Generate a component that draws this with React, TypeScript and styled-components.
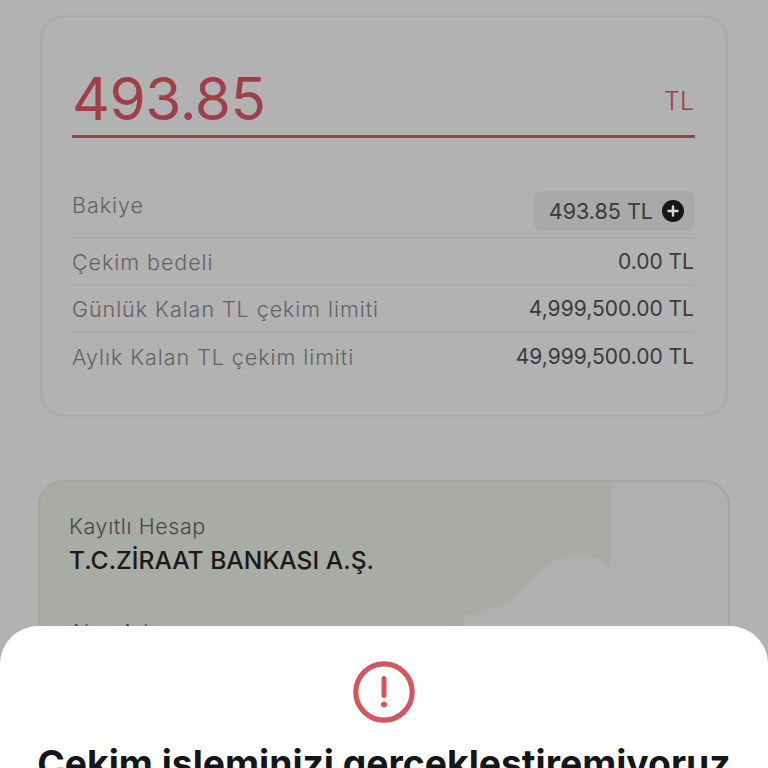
import React from "react";
import styled, { createGlobalStyle } from "styled-components";

const Global = createGlobalStyle`
  html, body { margin: 0; padding: 0; background: #b2b2b2; }
  * { box-sizing: border-box; }
`;

const Page = styled.div`
  position: relative;
  width: 768px;
  height: 768px;
  overflow: hidden;
  background: #b2b2b2;
  font-family: Inter, "Liberation Sans", sans-serif;
  padding: 15px 38px 0;
  display: flex;
  flex-direction: column;
  gap: 63px;
`;

const LimitCard = styled.section`
  margin: 0 2px;
  height: 402px;
  border: 3px solid #acacaa;
  border-radius: 24px;
  padding: 46px 30px 0 29px;
  flex: none;
`;

const AmountRow = styled.div`
  display: flex;
  justify-content: space-between;
  align-items: flex-end;
  height: 74px;
  border-bottom: 3px solid #9f3f47;
  color: #9f3f47;
  padding-bottom: 4px;
`;

const Amount = styled.span`
  font-size: 58.5px;
  line-height: 64px;
  letter-spacing: -0.4px;
  font-weight: 400;
`;

const Currency = styled.span`
  font-size: 25px;
  line-height: 26px;
  font-weight: 300;
  margin-right: 1px;
  margin-bottom: 17px;
`;

const Rows = styled.div`
  margin-top: 53px;
`;

const Row = styled.div<{ $first?: boolean; $last?: boolean }>`
  display: flex;
  justify-content: space-between;
  align-items: ${(p) => (p.$first ? "flex-start" : "center")};
  height: ${(p) => (p.$first ? "48px" : "47px")};
  border-bottom: ${(p) => (p.$last ? "none" : "2px solid #acacac")};
`;

const Label = styled.span<{ $first?: boolean }>`
  color: #626262;
  font-size: 21.5px;
  line-height: 26px;
  font-weight: 300;
  letter-spacing: 0.95px;
  margin-top: ${(p) => (p.$first ? "1px" : "0")};
`;

const Value = styled.span`
  color: #3a3a3a;
  font-size: 21px;
  line-height: 26px;
  font-weight: 400;
  margin-right: 1px;
  padding-top: 1px;
`;

const BalanceChip = styled.div`
  display: flex;
  align-items: center;
  gap: 8px;
  height: 40px;
  padding: 0 11px 0 15px;
  background: #a9a9a9;
  border-radius: 8px;
`;

const ChipValue = styled(Value)`
  font-size: 21.5px;
  padding-top: 0;
`;

const PlusBadge = styled.svg`
  width: 22px;
  height: 22px;
  display: block;
`;

const AccountCard = styled.section`
  position: relative;
  flex: none;
  height: 340px;
  background: #a9aba5;
  border: 2px solid #a4a69f;
  border-radius: 26px;
  overflow: hidden;
  padding: 31px 29px;
`;

const CardArt = styled.svg`
  position: absolute;
  right: 0;
  top: 0;
  width: 280px;
  height: 160px;
`;

const AccountLabel = styled.div`
  position: relative;
  color: #464644;
  font-size: 21.5px;
  line-height: 26px;
  font-weight: 300;
  letter-spacing: 0.6px;
`;

const BankName = styled.div`
  position: relative;
  margin-top: 6px;
  color: #1a1a1a;
  font-size: 24.6px;
  line-height: 30px;
  font-weight: 500;
`;

const HolderLabel = styled(AccountLabel)`
  margin-top: 44px;
`;

const Sheet = styled.div`
  position: absolute;
  left: 0;
  right: 0;
  top: 626px;
  height: 142px;
  background: #fff;
  border-radius: 38px 38px 0 0;
  overflow: hidden;
  display: flex;
  flex-direction: column;
  align-items: center;
  padding-top: 35px;
`;

const AlertIcon = styled.svg`
  width: 64px;
  height: 64px;
  display: block;
  flex: none;
`;

const SheetTitle = styled.h2`
  margin: 17px 0 0;
  color: #15161a;
  font-size: 37.3px;
  line-height: 44px;
  font-weight: 700;
  white-space: nowrap;
`;

const rows = [
  ["Çekim bedeli", "0.00 TL"],
  ["Günlük Kalan TL çekim limiti", "4,999,500.00 TL"],
  ["Aylık Kalan TL çekim limiti", "49,999,500.00 TL"],
];

export default function App() {
  return (
    <Page>
      <Global />
      <LimitCard>
        <AmountRow>
          <Amount>493.85</Amount>
          <Currency>TL</Currency>
        </AmountRow>
        <Rows>
          <Row $first>
            <Label $first>Bakiye</Label>
            <BalanceChip>
              <ChipValue>493.85 TL</ChipValue>
              <PlusBadge viewBox="0 0 22 22">
                <circle cx="11" cy="11" r="11" fill="#161616" />
                <path d="M11 6.5v9M6.5 11h9" stroke="#d8d8d8" strokeWidth="2.4" strokeLinecap="round" />
              </PlusBadge>
            </BalanceChip>
          </Row>
          {rows.map(([label, value], i) => (
            <Row key={label} $last={i === rows.length - 1}>
              <Label>{label}</Label>
              <Value>{value}</Value>
            </Row>
          ))}
        </Rows>
      </LimitCard>
      <AccountCard>
        <CardArt viewBox="0 0 280 160">
          <path d="M163 0H280V160H10L17 135C40 125 60 125 72 110C90 90 105 73 132 73C146 73 156 80 163 88C163 60 163 30 163 0Z" fill="#afafaf" />
        </CardArt>
        <AccountLabel>Kayıtlı Hesap</AccountLabel>
        <BankName>T.C.ZİRAAT BANKASI A.Ş.</BankName>
        <HolderLabel>Alıcı Adı</HolderLabel>
      </AccountCard>
      <Sheet>
        <AlertIcon viewBox="0 0 64 64">
          <circle cx="32" cy="31" r="28.2" fill="none" stroke="#d2575f" strokeWidth="5.2" />
          <path d="M32 17.5v17" stroke="#d2575f" strokeWidth="5" strokeLinecap="round" />
          <circle cx="32" cy="43.5" r="3" fill="#d2575f" />
        </AlertIcon>
        <SheetTitle>Çekim işleminizi gerçekleştiremiyoruz</SheetTitle>
      </Sheet>
    </Page>
  );
}
